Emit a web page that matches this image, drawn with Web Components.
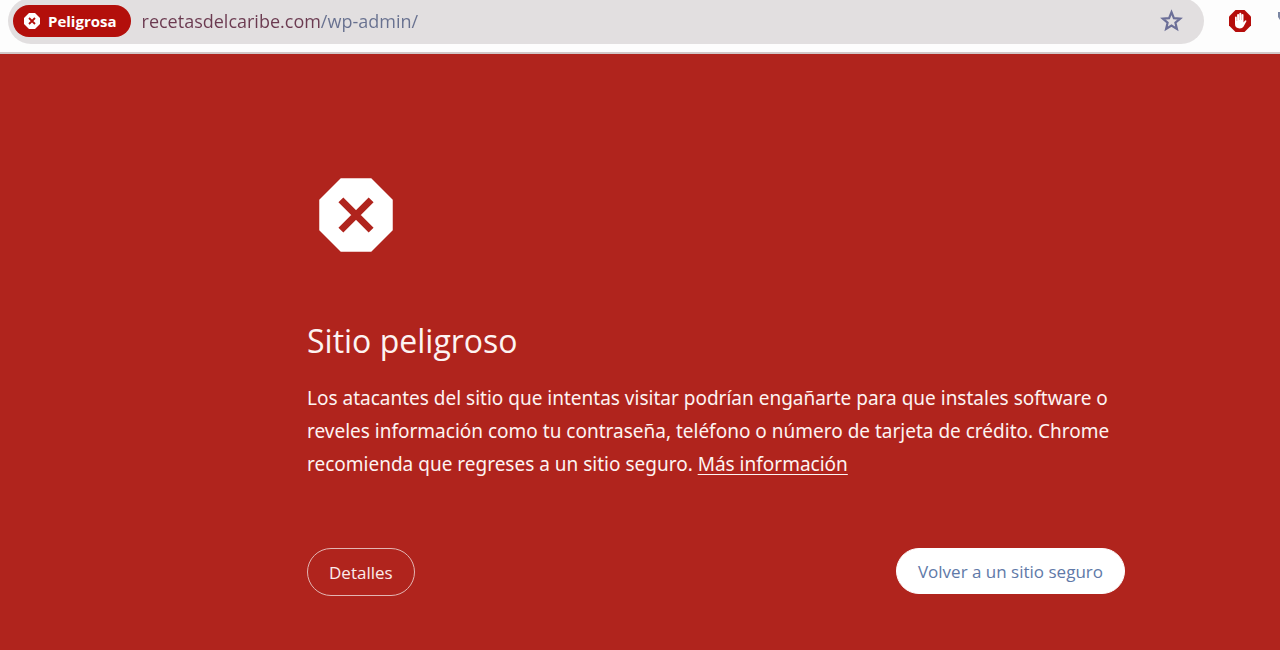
<!DOCTYPE html>
<html lang="es">
<head>
<meta charset="utf-8">
<meta name="viewport" content="width=device-width, initial-scale=1">
<title>Sitio peligroso</title>
<style>
    body {
        margin: 0;
        min-height: 100vh;
        display: flex;
        flex-direction: column;
        overflow-x: hidden;
        background: #b0241d;
        font-family: "Open Sans", "Noto Sans", sans-serif;
    }
</style>
</head>
<body>
<barra-navegador>
    <estado-sitio slot="estado">Peligrosa</estado-sitio>
</barra-navegador>
<aviso-peligro>
    <span slot="titulo">Sitio peligroso</span>
    Los atacantes del sitio que intentas visitar podrían engañarte para que instales software o reveles información como tu contraseña, teléfono o número de tarjeta de crédito. Chrome recomienda que regreses a un sitio seguro.
    <enlace-info slot="enlace">Más información</enlace-info>
    <boton-aviso slot="acciones">Detalles</boton-aviso>
    <boton-aviso slot="acciones" principal>Volver a un sitio seguro</boton-aviso>
</aviso-peligro>

<script>
class BarraNavegador extends HTMLElement {
    constructor() {
        super();
        this.attachShadow({ mode: 'open' });
    }

    connectedCallback() {
        this.shadowRoot.innerHTML = `
        <style>
            :host {
                display: flex;
                justify-content: space-between;
                align-items: flex-start;
                height: 52px;
                padding-left: 8px;
                background: #fdfdfd;
                border-bottom: 2px solid #d2c8c8;
            }
            .direccion {
                flex: 1;
                display: flex;
                align-items: center;
                box-sizing: border-box;
                height: 46px;
                margin-top: -2px;
                padding: 0 20px 0 5px;
                border-radius: 23px;
                background: #e2dfe0;
            }
            /* el dominio va más oscuro que la ruta */
            input {
                flex: 1;
                min-width: 0;
                height: 26px;
                margin-left: 11px;
                padding: 0;
                border: 0;
                outline: 0;
                font: 18px "Open Sans", "Noto Sans", sans-serif;
                color: #67708f;
                background: linear-gradient(to right, #6b3a50 179px, #67708f 179px);
                -webkit-background-clip: text;
                background-clip: text;
                -webkit-text-fill-color: transparent;
            }
            button {
                display: flex;
                padding: 0;
                border: 0;
                background: none;
            }
            .extensiones {
                display: flex;
                align-items: center;
                gap: 25px;
                height: 42px;
                margin-left: 24px;
            }
        </style>
        <div class="direccion">
            <slot name="estado"></slot>
            <input type="text" aria-label="Dirección" spellcheck="false" value="recetasdelcaribe.com/wp-admin/">
            <button aria-label="Añadir a marcadores">
                <svg width="24" height="24" viewBox="0 0 24 24">
                    <path d="M11.500 3.200l2.400 5.900 6.300.5-4.800 4.100 1.500 6.200-5.400-3.300-5.400 3.300 1.500-6.200-4.800-4.100 6.300-.5z" fill="none" stroke="#6c6f98" stroke-width="2.200"/>
                </svg>
            </button>
        </div>
        <div class="extensiones">
            <button aria-label="Bloqueador">
                <svg width="24" height="24" viewBox="0 0 24 24">
                    <path d="M7.500 1h9L23 7.500v9L16.500 23h-9L1 16.500v-9z" fill="#b50d0b"/>
                    <path d="M7 8.500q0-1 .9-1t.9 1v3.500h.3V6q0-1 1-1t1 1v5h.2V4.700q0-1 1-1t1 1V11h.2V6q0-1 1-1t1 1v7.500l1.300-1.700q.7-.8 1.400-.4.5.4.1 1.100l-2.700 5q-1.200 1.900-3.900 1.900Q7 19.400 7 15z" fill="#fff"/>
                </svg>
            </button>
            <svg width="3" height="24" viewBox="0 0 3 24" aria-hidden="true">
                <path d="M3 3H1v5l2 3z" fill="#7a86a3"/>
            </svg>
        </div>
    `;
    }
}
customElements.define('barra-navegador', BarraNavegador);

class EstadoSitio extends HTMLElement {
    constructor() {
        super();
        this.attachShadow({ mode: 'open' });
    }

    connectedCallback() {
        this.shadowRoot.innerHTML = `
        <style>
            :host {
                display: block;
            }
            button {
                display: flex;
                align-items: center;
                gap: 8px;
                height: 32px;
                padding: 0 14px 0 11px;
                border: 0;
                border-radius: 16px;
                background: #b30f0b;
                color: #fff;
                font: 700 15px "Open Sans", "Noto Sans", sans-serif;
            }
        </style>
        <button>
            <svg width="16" height="16" viewBox="0 0 16 16" aria-hidden="true">
                <path d="M5 0h6l5 5v6l-5 5H5l-5-5V5z" fill="#fff"/>
                <path d="M5 5l6 6M11 5l-6 6" stroke="#b30f0b" stroke-width="1.800"/>
            </svg>
            <slot></slot>
        </button>
    `;
    }
}
customElements.define('estado-sitio', EstadoSitio);

class AvisoPeligro extends HTMLElement {
    constructor() {
        super();
        this.attachShadow({ mode: 'open' });
    }

    connectedCallback() {
        this.shadowRoot.innerHTML = `
        <style>
            :host {
                display: block;
                padding: 112px 155px 54px 307px;
                color: #fdf3f2;
            }
            .icono {
                display: block;
            }
            h1 {
                margin: 52px 0 16px;
                font-size: 32px;
                line-height: 50px;
                font-weight: 400;
            }
            p {
                margin: 0;
                font-family: "Noto Sans", "Open Sans", sans-serif;
                font-size: 19px;
                line-height: 33px;
            }
            .acciones {
                display: flex;
                justify-content: space-between;
                margin-top: 67px;
            }
        </style>
        <svg class="icono" width="98" height="98" viewBox="0 0 24 24" aria-hidden="true">
            <path d="M8.270 3h7.460L21 8.270v7.460L15.730 21H8.270L3 15.730V8.270z" fill="#fff"/>
            <path d="M8.300 8.300l7.400 7.400M15.700 8.300l-7.400 7.400" stroke="#b0241d" stroke-width="1.700"/>
        </svg>
        <h1><slot name="titulo"></slot></h1>
        <p><slot></slot><slot name="enlace"></slot></p>
        <div class="acciones"><slot name="acciones"></slot></div>
    `;
    }
}
customElements.define('aviso-peligro', AvisoPeligro);

class EnlaceInfo extends HTMLElement {
    constructor() {
        super();
        this.attachShadow({ mode: 'open' });
    }

    connectedCallback() {
        this.shadowRoot.innerHTML = `
        <style>
            :host {
                display: inline;
                font-family: "Noto Sans", "Open Sans", sans-serif;
                font-size: 19px;
            }
            a {
                color: inherit;
                text-underline-offset: 3px;
                text-decoration-skip-ink: none;
            }
        </style>
        <a href="#"><slot></slot></a>
    `;
    }
}
customElements.define('enlace-info', EnlaceInfo);

class BotonAviso extends HTMLElement {
    constructor() {
        super();
        this.attachShadow({ mode: 'open' });
    }

    connectedCallback() {
        this.shadowRoot.innerHTML = `
        <style>
            :host {
                display: block;
            }
            button {
                height: 48px;
                padding: 0 21px;
                border: 1px solid #e3b5b2;
                border-radius: 24px;
                background: none;
                color: #fbeceb;
                font: 17px "Open Sans", "Noto Sans", sans-serif;
            }
            :host([principal]) button {
                height: 46px;
                border-color: #fff;
                background: #fff;
                color: #6079a8;
            }
        </style>
        <button><slot></slot></button>
    `;
    }
}
customElements.define('boton-aviso', BotonAviso);
</script>
</body>
</html>
